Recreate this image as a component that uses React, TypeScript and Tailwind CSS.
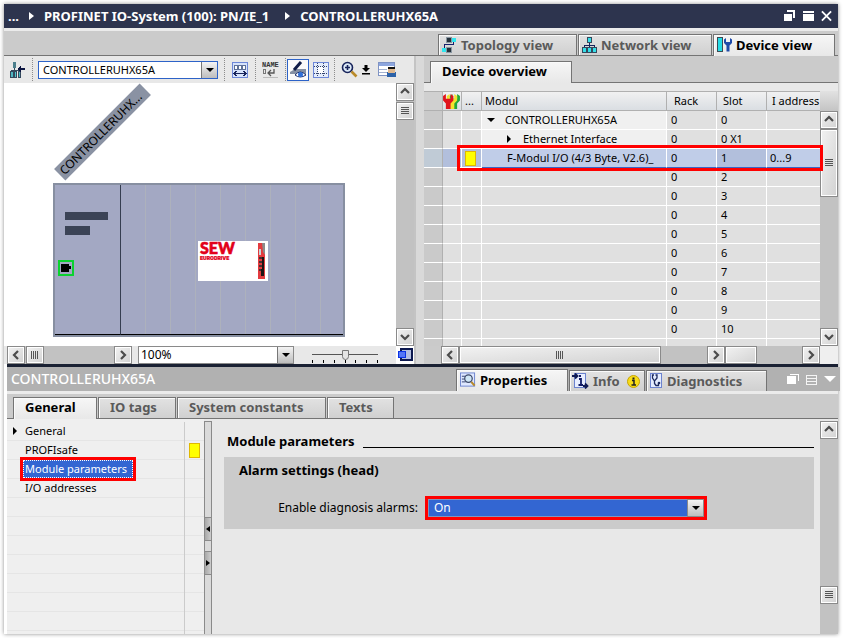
import React from "react";

type Dir = "up" | "down" | "left" | "right";

const arrowPaths: Record<Dir, string> = {
  up: "M4 9 L8 5 L12 9",
  down: "M4 6 L8 10 L12 6",
  left: "M10 4 L6 8 L10 12",
  right: "M6 4 L10 8 L6 12",
};

const raised =
  "block shrink-0 border border-[#8a8a8a] bg-gradient-to-br from-[#f2f2f2] to-[#d2d2d2] shadow-[inset_0_0_0_1px_#ffffff]";

function ScrollButton({ dir, label }: { dir: Dir; label: string }) {
  return (
    <button type="button" aria-label={label} className={`${raised} h-[18px] w-[18px]`}>
      <svg viewBox="0 0 16 16" className="h-4 w-4" fill="none" stroke="#4c4c4c" strokeWidth="2.2">
        <path d={arrowPaths[dir]} />
      </svg>
    </button>
  );
}

function Grip({ vertical }: { vertical?: boolean }) {
  return (
    <svg width="10" height="10" viewBox="0 0 10 10" shapeRendering="crispEdges" fill="#555">
      {[1, 3, 5, 7].map((n) =>
        vertical ? <rect key={n} x={n} y="1" width="1" height="8" /> : <rect key={n} x="1" y={n} width="8" height="1" />
      )}
    </svg>
  );
}

function Caret() {
  return (
    <svg width="8" height="4" viewBox="0 0 8 4">
      <path d="M0 0H8L4 4Z" fill="#000" />
    </svg>
  );
}

function TopologyIcon() {
  return (
    <svg width="15" height="16" viewBox="0 0 15 16" shapeRendering="crispEdges">
      <rect x="4" y="0" width="6" height="6" fill="#8a97a2" />
      <rect x="5" y="1" width="4" height="4" fill="#26323c" />
      <rect x="10" y="1" width="4" height="4" fill="#2fe6ee" />
      <rect x="0" y="11" width="4" height="4" fill="#2fe6ee" />
      <rect x="4" y="10" width="6" height="6" fill="#8a97a2" />
      <rect x="5" y="11" width="4" height="4" fill="#26323c" />
      <path d="M11.5 5V7.500H2.500V11" fill="none" stroke="#16206a" strokeWidth="1" />
    </svg>
  );
}

function NetworkIcon() {
  return (
    <svg width="15" height="16" viewBox="0 0 15 16" shapeRendering="crispEdges">
      <path d="M7.5 5V10M2.5 10V8.5H12.5V10" fill="none" stroke="#17235a" />
      {[
        [5, 0],
        [0, 10],
        [5, 10],
        [10, 10],
      ].map(([x, y]) => (
        <g key={`${x}-${y}`}>
          <rect x={x} y={y} width="5" height="6" fill="#34495e" />
          <rect x={x + 1} y={y + 1} width="3" height="4" fill="#35dfe8" />
        </g>
      ))}
    </svg>
  );
}

function DeviceIcon() {
  return (
    <svg width="15" height="16" viewBox="0 0 15 16">
      <rect x="0.5" y="0.5" width="5" height="14" fill="#25dbe5" stroke="#3b4a55" />
      <path d="M7 2.500V6L9.500 8.500V14.500H12.500V8.500L15 6V2.500L13 1V5H9V1Z" fill="#1f4aa8" />
    </svg>
  );
}

function WrenchesIcon() {
  const wrench = "M0 2V7L3 10V16H8V10L11 7V2L8 0V5H3V0Z";
  return (
    <svg width="17" height="15" viewBox="0 0 18 16">
      <path d={wrench} transform="translate(7 0)" fill="#22a83a" />
      <path d={wrench} transform="translate(4 0)" fill="#f3e32b" />
      <path d={wrench} fill="#e0141c" />
    </svg>
  );
}

function PropertiesIcon() {
  return (
    <svg width="16" height="16" viewBox="0 0 17 16">
      <rect x="0.500" y="0.500" width="15" height="14" fill="#dfe8ff" stroke="#6c83cf" />
      <path d="M2 4H6M2 7H5M2 10H6" stroke="#31406e" />
      <circle cx="9" cy="6.500" r="4" fill="#cfe6f5" stroke="#3c4868" strokeWidth="1.300" />
      <path d="M12 10L15.500 14" stroke="#b98a2a" strokeWidth="2.200" />
    </svg>
  );
}

function InfoIcon() {
  return (
    <svg width="17" height="16" viewBox="0 0 17 16">
      <rect x="2.500" y="0.500" width="11" height="14" fill="#e8eeff" stroke="#6c83cf" />
      <path d="M0 3H5M3 0.500L5.500 3L3 5.500M11 13H15M13 10.500L15.500 13L13 15.500" stroke="#111c55" strokeWidth="1.800" fill="none" />
      <path d="M7 6H9V12M6.500 12H11" stroke="#111c66" strokeWidth="1.800" fill="none" />
      <rect x="7" y="2" width="2" height="2" fill="#111c66" />
    </svg>
  );
}

function DiagnosticsIcon() {
  return (
    <svg width="13" height="16" viewBox="0 0 13 16">
      <rect x="0.500" y="0.500" width="11" height="14" fill="#e4ecff" stroke="#6c83cf" />
      <path d="M4 2H2.500V5L4.500 8L7 5V2H5.500M4.500 8V10.500L6 12.500H8.500V10" fill="none" stroke="#1d2a5e" strokeWidth="1.300" />
      <circle cx="9" cy="10" r="1.300" fill="#1d2a5e" />
    </svg>
  );
}

const tabBase =
  "border-x border-t border-[#747474] text-[13px] font-bold whitespace-nowrap shadow-[inset_1px_1px_0_#fafafa]";
const tabActive = "h-[22px] bg-gradient-to-b from-[#f6f6f6] to-[#e8e8e8] text-black";
const tabIdle = "h-[21px] bg-gradient-to-b from-[#e2e2e2] to-[#d0d0d0] text-[#5a5a5a]";

function ViewTab({ icon, label, active, width }: { icon: React.ReactNode; label: string; active?: boolean; width: string }) {
  return (
    <button
      type="button"
      role="tab"
      aria-selected={!!active}
      className={`flex items-center gap-1 pl-[3px] leading-[18px] ${tabBase} ${width} ${active ? `pb-[2px] ${tabActive}` : tabIdle}`}
    >
      {icon}
      {label}
    </button>
  );
}

function LabelTab({ label, active, width }: { label: string; active?: boolean; width: string }) {
  return (
    <button
      type="button"
      role="tab"
      aria-selected={!!active}
      className={`pl-[11px] text-left leading-4 ${tabBase} ${width} ${active ? `pb-1 ${tabActive}` : `pb-[2px] ${tabIdle}`}`}
    >
      {label}
    </button>
  );
}

function TitleBar() {
  const sep = (
    <svg width="5" height="8" viewBox="0 0 5 8">
      <path d="M0 0L5 4L0 8Z" fill="#fff" />
    </svg>
  );
  return (
    <header className="flex h-6 items-center bg-[#2d344e] pr-[6px] pl-1 text-[13px] leading-6 font-bold whitespace-nowrap text-white">
      <nav aria-label="Path" className="flex flex-1 items-center gap-[10px]">
        <span>...</span>
        {sep}
        <span className="pr-[6px]">PROFINET IO-System (100): PN/IE_1</span>
        {sep}
        <span>CONTROLLERUHX65A</span>
      </nav>
      <div className="flex items-center gap-[7px]">
        <button type="button" aria-label="Float">
          <svg className="block" width="12" height="12" viewBox="0 0 12 12" shapeRendering="crispEdges">
            <path d="M3 1H10V8" fill="none" stroke="#fff" strokeWidth="2" />
            <rect x="0" y="3" width="8" height="8" fill="#fff" stroke="#2d344e" />
            <rect x="0" y="4" width="7" height="7" fill="#fff" />
          </svg>
        </button>
        <button type="button" aria-label="Maximize">
          <svg className="block" width="11" height="12" viewBox="0 0 11 12" shapeRendering="crispEdges" fill="#fff">
            <rect y="1" width="11" height="2" />
            <rect y="4" width="11" height="7" />
          </svg>
        </button>
        <button type="button" aria-label="Close">
          <svg className="block" width="11" height="12" viewBox="0 0 12 12">
            <path d="M1 1L11 11M11 1L1 11" stroke="#fff" strokeWidth="2" />
          </svg>
        </button>
      </div>
    </header>
  );
}

function Dots() {
  return <span className="h-[23px] w-0 shrink-0 border-l border-dotted border-[#8c8c8c]" />;
}

function DeviceToolbar() {
  return (
    <div role="toolbar" aria-label="Device" className="flex h-[27px] items-center bg-[#e8e8e8] pl-[5px]">
      <button type="button" aria-label="Go to network view" className="mr-[6px]">
        <svg className="block" width="17" height="16" viewBox="0 0 17 16" shapeRendering="crispEdges">
          <path d="M5.500 5V9M2.500 10V8.500H9.500V10" fill="none" stroke="#34495e" />
          <rect x="4" y="0" width="3" height="6" fill="#4c7f8c" />
          <rect x="1" y="9" width="3" height="6" fill="#4fb7c2" stroke="#34495e" />
          <rect x="5" y="9" width="2" height="6" fill="#4fc7cf" stroke="#34495e" />
          <rect x="9" y="9" width="2" height="6" fill="#4fb7c2" stroke="#34495e" />
          <path d="M8 7L12 3V6H16V8H12V11Z" fill="#0c1540" />
        </svg>
      </button>
      <Dots />
      <div className="relative ml-[5px] h-[18px] w-[180px] border border-[#2d63c8] bg-white">
        <select aria-label="Device" className="block h-4 w-full appearance-none bg-transparent pl-1 text-[11px] leading-4 text-black outline-none">
          <option>CONTROLLERUHX65A</option>
        </select>
        <span className="pointer-events-none absolute top-0 right-0 flex h-4 w-4 items-center justify-center border-l border-[#777] bg-gradient-to-b from-[#f4f4f4] to-[#bdbdbd]">
          <Caret />
        </span>
      </div>
      <span className="ml-[6px] flex">
        <Dots />
      </span>
      <button type="button" aria-label="Show module labels" className="mx-[7px]">
        <svg className="block" width="16" height="16" viewBox="0 0 16 16" shapeRendering="crispEdges">
          <rect x="0.500" y="0.500" width="15" height="15" fill="#d7e3fb" stroke="#6d87d8" />
          {[2, 6, 10].map((x) => (
            <rect key={x} x={x + 0.5} y="3.500" width="3" height="4" fill="#fff" stroke="#5f7199" />
          ))}
          <path d="M2 11.500H14M4.500 9L2 11.500L4.500 14M11.500 9L14 11.500L11.500 14" fill="none" stroke="#16225a" />
        </svg>
      </button>
      <Dots />
      <button type="button" aria-label="Name" className="mx-[6px]">
        <svg className="block" width="17" height="17" viewBox="0 0 17 17">
          <text x="0" y="6" fontSize="7" fontWeight="700" fill="#333" fontFamily="Liberation Mono, monospace">
            NAME
          </text>
          <rect x="1.500" y="8.500" width="2" height="4" fill="none" stroke="#777" />
          <path d="M12 8V12H6M9 9L6 12L9 15" fill="none" stroke="#555" strokeWidth="1.300" />
          <path d="M1 16.500H16" stroke="#bbb" />
        </svg>
      </button>
      <Dots />
      <button type="button" aria-label="Show view" aria-pressed="true" className="ml-px flex h-[22px] w-[22px] items-center justify-center border border-[#2d63c8] bg-[#fafafa]">
        <svg width="18" height="18" viewBox="0 0 18 18">
          <path d="M1 11L6 8H17V13H1Z" fill="#8590a3" />
          <path d="M5 9L12 1" stroke="#101c48" strokeWidth="3" />
          <path d="M6 14Q11 8 17 14Q11 18 6 14Z" fill="#fff" stroke="#1b2f6e" />
          <circle cx="11.500" cy="13.500" r="2.500" fill="#2f6fd8" />
        </svg>
      </button>
      <button type="button" aria-label="Show grid" className="mr-[5px] ml-1">
        <svg className="block" width="16" height="16" viewBox="0 0 16 16" shapeRendering="crispEdges">
          <rect x="0.500" y="0.500" width="15" height="15" fill="#e4ecfb" stroke="#6d87d8" />
          <rect x="5" y="5" width="6" height="6" fill="#fff" />
          <path d="M1 4.500H15M1 11.500H15M4.500 1V15M10.500 1V15" stroke="#33436f" strokeDasharray="1 1" />
        </svg>
      </button>
      <Dots />
      <button type="button" aria-label="Zoom in" className="mr-1 ml-[6px] flex items-center gap-1">
        <svg width="17" height="17" viewBox="0 0 17 17">
          <circle cx="6.500" cy="6.500" r="5" fill="#dce9f7" stroke="#17235a" strokeWidth="1.600" />
          <path d="M6.500 4V9M4 6.500H9" stroke="#17235a" strokeWidth="1.600" />
          <path d="M10.500 10.500L15.500 15.500" stroke="#b98a2a" strokeWidth="2.600" />
        </svg>
        <svg width="8" height="12" viewBox="0 0 8 12">
          <path d="M2.500 1H5.500V4H8L4 8L0 4H2.500ZM0 9H8V10.500H0Z" fill="#000" />
        </svg>
      </button>
      <button type="button" aria-label="Save window settings" className="ml-1">
        <svg className="block" width="18" height="17" viewBox="0 0 18 17">
          <rect x="0.500" y="1.500" width="16" height="13" fill="#fff" stroke="#7f93c4" />
          <rect x="1" y="2" width="15" height="3" fill="#8da6de" />
          <path d="M1 8.500H9M1 11.500H9" stroke="#a4b2d0" />
          <rect x="9" y="11" width="9" height="5" fill="#2d62a8" />
          <rect x="10" y="6" width="7" height="3" fill="#111" />
          <rect x="10" y="8" width="7" height="4" fill="#e0b98f" />
        </svg>
      </button>
    </div>
  );
}

function DeviceCanvas() {
  return (
    <div className="relative min-w-0 flex-1 overflow-hidden bg-white">
      <div className="absolute top-[41px] left-[38px] h-4 w-[121px] -rotate-45 bg-[#8a92a3] pl-[3px] text-[12px] leading-4 text-black">
        CONTROLLERUHX...
      </div>
      <div className="mt-[100px] ml-[49px] flex h-[154px] w-[292px] border-2 border-[#878fa1] bg-[#a3a8c3]">
        <div className="flex w-[66px] flex-col border-r border-b border-r-[#353d50] border-b-black">
          <span className="mt-[27px] ml-[10px] h-2 w-[43px] bg-[#3b4356]" />
          <span className="mt-[6px] ml-[10px] h-[9px] w-[25px] bg-[#3b4356]" />
          <svg className="mt-[25px] ml-[3px]" width="16" height="16" viewBox="0 0 16 16" shapeRendering="crispEdges">
            <rect x="1" y="1" width="14" height="14" fill="#a3a8c3" stroke="#0bd22f" strokeWidth="2" />
            <path d="M3 4H11V6H13V9H11V12H3Z" fill="#000" />
          </svg>
        </div>
        <div className="relative flex flex-1 border-b border-black">
          {[1, 2, 3, 4, 5, 6, 7, 8].map((n) => (
            <span key={n} className="w-[25px] shrink-0 border-r border-[#adb1bc]" />
          ))}
          <svg className="absolute top-14 left-[77px] overflow-visible" width="70" height="40" viewBox="0 0 70 40">
            <rect width="70" height="40" fill="#fff" />
            <text x="2" y="13" fontSize="16" fontWeight="900" fill="#e2001a" stroke="#e2001a" strokeWidth="0.600" fontFamily="Lato, sans-serif">
              SEW
            </text>
            <text x="2" y="19" fontSize="5" fontWeight="900" fill="#e2001a" stroke="#e2001a" strokeWidth="0.200" fontFamily="Inter, sans-serif">
              EURODRIVE
            </text>
            <rect x="60" y="2" width="7" height="36" fill="#e33b3f" />
            <path d="M64 2H67V14L65 11Z" fill="#8b8b8b" />
            <rect x="61" y="8" width="2" height="6" fill="#c9d4d8" />
            <path d="M61 17H64M61 21H64M61 25H64M61 29H64" stroke="#4a3033" strokeWidth="2" />
            <path d="M64 16H66V35H63V28H64Z" fill="#1d1515" />
          </svg>
        </div>
      </div>
    </div>
  );
}

function DevicePane() {
  return (
    <section aria-label="Device view" className="flex w-[412px] shrink-0 flex-col border-r-2 border-[#c4c4c4] bg-[#e8e8e8]">
      <DeviceToolbar />
      <div className="flex h-[263px]">
        <DeviceCanvas />
        <div className="flex w-[18px] flex-col bg-[#c2c2c2]">
          <ScrollButton dir="up" label="Scroll up" />
          <span className={`${raised} mt-px h-[18px] w-[18px]`}>
            <span className="flex h-4 w-4 items-center justify-center">
              <Grip />
            </span>
          </span>
          <span className="flex-1" />
          <ScrollButton dir="down" label="Scroll down" />
        </div>
      </div>
      <div className="flex h-[18px] items-center pl-[3px]">
        <div className="flex w-[125px] bg-[#c2c2c2]">
          <ScrollButton dir="left" label="Scroll left" />
          <span className={`${raised} ml-px h-[18px] w-[18px]`}>
            <span className="flex h-4 w-4 items-center justify-center">
              <Grip vertical />
            </span>
          </span>
          <span className="flex-1" />
          <ScrollButton dir="right" label="Scroll right" />
        </div>
        <div className="relative ml-[6px] h-[18px] w-[156px] border border-[#8a8a8a] bg-white">
          <select aria-label="Zoom" className="block h-4 w-full appearance-none bg-transparent pl-[2px] text-[12px] leading-4 text-black outline-none">
            <option>100%</option>
          </select>
          <span className="pointer-events-none absolute top-0 right-0 flex h-4 w-4 items-center justify-center border-l border-[#777] bg-gradient-to-b from-[#f4f4f4] to-[#bdbdbd]">
            <Caret />
          </span>
        </div>
        <div className="relative ml-[18px] h-[18px] w-[67px]">
          <svg className="absolute inset-0" width="67" height="18" viewBox="0 0 67 18" shapeRendering="crispEdges">
            <rect y="8" width="66" height="1" fill="#555" />
            {[0, 11, 22, 33, 43, 54, 65].map((x) => (
              <rect key={x} x={x} y="14" width="1" height="3" fill="#000" />
            ))}
          </svg>
          <input
            type="range"
            aria-label="Zoom level"
            defaultValue={50}
            className="absolute inset-0 h-[17px] w-full appearance-none bg-transparent [&::-webkit-slider-thumb]:h-[10px] [&::-webkit-slider-thumb]:w-[7px] [&::-webkit-slider-thumb]:appearance-none [&::-webkit-slider-thumb]:rounded-b-full [&::-webkit-slider-thumb]:border [&::-webkit-slider-thumb]:border-[#777] [&::-webkit-slider-thumb]:bg-[#e4e4e4]"
          />
        </div>
        <span className="flex-1" />
        <button type="button" aria-label="Overview" className="h-[18px] w-[18px] bg-white">
          <svg className="block" width="18" height="18" viewBox="0 0 18 18" shapeRendering="crispEdges">
            <rect x="5" y="3" width="11" height="11" fill="#b4bfe0" stroke="#0d1950" strokeWidth="2" />
            <rect x="2.500" y="5.500" width="7" height="6" fill="#5577f6" stroke="#0a33e6" />
          </svg>
        </button>
      </div>
    </section>
  );
}

const rows = [
  { name: "CONTROLLERUHX65A", rack: "0", slot: "0", addr: "" },
  { name: "Ethernet Interface", rack: "0", slot: "0 X1", addr: "" },
  { name: "F-Modul I/O (4/3 Byte, V2.6)_", rack: "0", slot: "1", addr: "0...9" },
  ...["2", "3", "4", "5", "6", "7", "8", "9", "10"].map((slot) => ({ name: "", rack: "0", slot, addr: "" })),
];

const head = "border-r border-[#b0b0b0] p-0 text-left font-normal";
const cell = "border-r border-b border-white p-0";

function OverviewTable() {
  return (
    <div className="relative min-w-0 flex-1">
      <div className="h-[255px] overflow-hidden bg-[#e0e0e0]">
        <table className="w-full table-fixed border-separate border-spacing-0 text-[11px] leading-[18px] whitespace-nowrap text-black">
          <colgroup>
            <col className="w-[19px]" />
            <col className="w-[19px]" />
            <col className="w-5" />
            <col />
            <col className="w-[50px]" />
            <col className="w-[50px]" />
            <col className="w-[53px]" />
          </colgroup>
          <thead>
            <tr className="h-5 bg-gradient-to-b from-[#f2f2f2] to-[#d9dde2] [&>th]:border-y [&>th]:border-y-[#b0b0b0]">
              <th className={`${head} bg-[#d0d0d0]`} aria-label="Row" />
              <th className={head} aria-label="Status">
                <WrenchesIcon />
              </th>
              <th className={`${head} pl-[3px]`}>...</th>
              <th className={`${head} pl-[3px]`}>Modul</th>
              <th className={`${head} pl-[7px]`}>Rack</th>
              <th className={`${head} pl-[6px]`}>Slot</th>
              <th className="overflow-hidden p-0 pl-[5px] text-left font-normal">I address</th>
            </tr>
          </thead>
          <tbody>
            {rows.map((r, i) => {
              const selected = i === 2;
              const soft = selected ? "bg-[#c0cde8] border-b-[#3b66c4]" : i < 2 ? "bg-[#f0f0f0]" : "";
              return (
                <tr key={r.slot} aria-selected={selected} className={`h-[19px] ${selected ? "bg-[#b2bfdc]" : "bg-[#e0e0e0]"}`}>
                  <td className={`border-r border-b border-r-[#b0b0b0] border-b-white p-0 ${selected ? "bg-[#c0cbd6]" : "bg-[#cacaca]"}`} />
                  <td className={cell} />
                  <td className={`${cell} pl-[3px]`}>
                    {selected && <span className="block h-[15px] w-[11px] border border-[#e0b800] bg-[#ffff00]" />}
                  </td>
                  <td className={`${cell} ${soft}`}>
                    {i === 0 && (
                      <span className="flex items-center gap-[10px] pl-[5px]">
                        <Caret />
                        {r.name}
                      </span>
                    )}
                    {i === 1 && (
                      <span className="flex items-center gap-3 pl-[25px]">
                        <svg width="4" height="8" viewBox="0 0 4 8">
                          <path d="M0 0L4 4L0 8Z" />
                        </svg>
                        {r.name}
                      </span>
                    )}
                    {i === 2 && <span className="pl-[25px]">{r.name}</span>}
                  </td>
                  <td className={`${cell} pl-1 ${selected ? soft : ""}`}>{r.rack}</td>
                  <td className={`${cell} pl-1 ${selected ? "border-b-[#3b66c4]" : ""}`}>{r.slot}</td>
                  <td className={`border-b border-white p-0 pl-[3px] ${selected ? soft : ""}`}>{r.addr}</td>
                </tr>
              );
            })}
            <tr className="h-[19px]">
              <td className="border-r border-[#b0b0b0] bg-[#cacaca] p-0" />
              <td className={cell} />
              <td className={cell} />
              <td className={cell} />
              <td className={cell} />
              <td className={cell} />
              <td className="p-0" />
            </tr>
          </tbody>
        </table>
      </div>
      <div className="pointer-events-none absolute top-[54px] -right-[3px] left-[33px] z-10 h-[26px] border-[3px] border-[#ff0000]" />
    </div>
  );
}

function OverviewPane() {
  return (
    <section aria-label="Device overview" className="flex min-w-0 flex-1 flex-col border-l-8 border-[#d9d9d9] bg-[#e8e8e8]">
      <div role="tablist" className="flex h-[27px] items-end border-b border-[#747474] bg-[#cbcbcb] pl-[6px] [&>[aria-selected=true]]:-mb-px">
        <LabelTab label="Device overview" active width="w-[142px]" />
      </div>
      <div className="mt-2 flex">
        <OverviewTable />
        <div className="flex w-[18px] flex-col bg-[#c2c2c2]">
          <span className="h-5 bg-gradient-to-b from-[#e2e2e2] to-[#c4c4c4]" />
          <ScrollButton dir="up" label="Scroll overview up" />
          <span className={`${raised} h-[68px] w-[18px]`}>
            <span className="flex h-full items-center justify-center">
              <Grip />
            </span>
          </span>
          <span className="flex-1" />
          <ScrollButton dir="down" label="Scroll overview down" />
        </div>
      </div>
      <div className="flex h-[18px] bg-[#c2c2c2]">
        <span className="w-[17px] bg-[#cbcbcb]" />
        <ScrollButton dir="left" label="Scroll overview left" />
        <span className={`${raised} h-[18px] w-[202px]`}>
          <span className="flex h-full items-center justify-center">
            <Grip vertical />
          </span>
        </span>
        <span className="flex-1" />
        <ScrollButton dir="right" label="Scroll list right" />
        <span className={`${raised} h-[18px] w-8`} />
        <span className="flex-1" />
        <ScrollButton dir="right" label="Scroll overview right" />
        <span className="w-[18px] bg-[#efefef]" />
      </div>
    </section>
  );
}

function InspectorHeader() {
  return (
    <div className="-mr-[2px] flex h-6 items-end bg-[#b1b1b1] pr-1 pl-1">
      <h2 className="flex-1 text-[14px] leading-6 font-medium whitespace-nowrap text-white">CONTROLLERUHX65A</h2>
      <div role="tablist" aria-label="Inspector" className="flex items-end gap-px">
        <ViewTab icon={<PropertiesIcon />} label="Properties" active width="w-[112px]" />
        <button type="button" role="tab" aria-selected="false" className={`flex w-[76px] items-center gap-1 pl-[2px] leading-[18px] ${tabBase} ${tabIdle}`}>
          <InfoIcon />
          Info
          <svg className="mr-1 ml-auto" width="13" height="13" viewBox="0 0 13 13">
            <circle cx="6.500" cy="6.500" r="6" fill="#f7dc18" stroke="#c7a400" />
            <path d="M5 5.500H7V10M4.500 10H9" fill="none" stroke="#222" strokeWidth="1.500" />
            <rect x="5.500" y="2.500" width="2" height="2" fill="#222" />
          </svg>
        </button>
        <ViewTab icon={<DiagnosticsIcon />} label="Diagnostics" width="w-[121px]" />
      </div>
      <div className="ml-5 flex h-6 items-center gap-[7px]">
        <button type="button" aria-label="Float inspector">
          <svg className="block" width="12" height="12" viewBox="0 0 12 12" shapeRendering="crispEdges">
            <path d="M3 1H11V8" fill="none" stroke="#fff" strokeWidth="1" />
            <rect x="0" y="3" width="9" height="8" fill="#fff" />
          </svg>
        </button>
        <button type="button" aria-label="Show list">
          <svg className="block" width="11" height="11" viewBox="0 0 11 11" shapeRendering="crispEdges">
            <path d="M0 1.500H11M0 4.500H11M0 7.500H11M0 10.500H11M.5 1V11M10.500 1V11" stroke="#f4f4f4" />
          </svg>
        </button>
        <button type="button" aria-label="Collapse inspector">
          <svg className="block" width="12" height="6" viewBox="0 0 12 6">
            <path d="M0 0H12L6 6Z" fill="#fff" />
          </svg>
        </button>
      </div>
    </div>
  );
}

function SettingsTree() {
  return (
    <nav aria-label="Settings" className="flex w-[197px] shrink-0 bg-[#efefef] pt-[3px] text-[11px] leading-[18px] text-black">
      <ul className="w-[178px] border-r border-[#cbcbcb]">
        <li className="flex h-[19px] items-center border-b border-[#e5e5e5] pl-[6px]">
          <svg width="4" height="8" viewBox="0 0 4 8">
            <path d="M0 0L4 4L0 8Z" />
          </svg>
          <a href="#general" className="pl-2">
            General
          </a>
        </li>
        <li className="flex h-[19px] items-center border-b border-[#e5e5e5] pl-[18px]">
          <a href="#profisafe">PROFIsafe</a>
        </li>
        <li className="relative flex h-[19px] items-center border-b border-[#e5e5e5] pl-4">
          <a href="#module" aria-current="true" className="w-[110px] border border-dotted border-white bg-[#3366d2] pl-px leading-4 whitespace-nowrap text-white">
            Module parameters
          </a>
          <span className="pointer-events-none absolute -top-[3px] left-[13px] h-6 w-[116px] border-[3px] border-[#ff0000]" />
        </li>
        <li className="flex h-[19px] items-center border-b border-[#e5e5e5] pl-[18px]">
          <a href="#addresses">I/O addresses</a>
        </li>
        {[0, 1, 2, 3, 4, 5, 6].map((n) => (
          <li key={n} className="h-[19px] border-b border-[#e5e5e5]" />
        ))}
      </ul>
      <div className="flex-1">
        {[0, 1, 2, 3, 4, 5, 6, 7, 8, 9, 10].map((n) => (
          <div key={n} className="flex h-[19px] items-center border-b border-[#e5e5e5] pl-1">
            {n === 1 && <span className="h-[15px] w-[11px] border border-[#e0b800] bg-[#ffff00]" />}
          </div>
        ))}
      </div>
    </nav>
  );
}

function Splitter() {
  const btn = "flex h-6 items-center justify-center border-y border-[#8a8a8a] bg-gradient-to-r from-[#a8a8a8] to-[#cccccc]";
  return (
    <div className="mt-[2px] w-2 shrink-0 border-x border-t border-[#8a8a8a] bg-[#dadada] pt-[95px]">
      <button type="button" aria-label="Collapse tree" className={`${btn} w-full`}>
        <svg width="4" height="6" viewBox="0 0 4 6">
          <path d="M4 0L0 3L4 6Z" />
        </svg>
      </button>
      <button type="button" aria-label="Expand tree" className={`${btn} mt-[10px] w-full`}>
        <svg width="4" height="6" viewBox="0 0 4 6">
          <path d="M0 0L4 3L0 6Z" />
        </svg>
      </button>
    </div>
  );
}

function Inspector() {
  return (
    <section aria-label="Inspector" className="ml-[3px] flex flex-1 flex-col">
      <InspectorHeader />
      <div role="tablist" aria-label="Property groups" className="flex h-7 items-end gap-px border-t-[3px] border-b border-t-[#ebebeb] border-b-[#747474] bg-[#cbcbcb] pl-[6px] [&>[aria-selected=true]]:-mb-px">
        <LabelTab label="General" active width="w-[84px]" />
        <LabelTab label="IO tags" width="w-[78px]" />
        <LabelTab label="System constants" width="w-[149px]" />
        <LabelTab label="Texts" width="w-[67px]" />
      </div>
      <div className="flex flex-1 bg-[#e8e8e8]">
        <SettingsTree />
        <Splitter />
        <div className="flex-1 pt-3 pr-[6px] pl-3 text-black">
          <h3 className="flex items-center gap-2 pl-[3px] text-[13px] leading-5 font-bold whitespace-nowrap">
            Module parameters
            <span className="mt-3 flex-1 border-b border-black" />
          </h3>
          <div className="mt-[6px] h-[72px] bg-[#cbcbcb]">
            <h4 className="pt-[3px] pl-[15px] text-[13px] leading-5 font-bold">Alarm settings (head)</h4>
            <div className="mt-4 flex items-center">
              <label htmlFor="alarms" className="w-[201px] pr-[7px] text-right text-[12px] leading-6 whitespace-nowrap">
                Enable diagnosis alarms:
              </label>
              <div className="relative h-6 w-[282px] border-[3px] border-[#ff0000]">
                <select id="alarms" className="block h-[18px] w-full appearance-none border border-[#8096bd] bg-[#3366d2] pl-[5px] text-[12px] leading-4 text-white outline-none">
                  <option>On</option>
                </select>
                <span className="pointer-events-none absolute top-0 right-0 flex h-[18px] w-[17px] items-center justify-center border border-[#8a8a8a] bg-gradient-to-b from-[#f4f4f4] to-[#bdbdbd]">
                  <Caret />
                </span>
              </div>
            </div>
          </div>
        </div>
        <div className="mt-[2px] flex w-[18px] flex-col bg-[#c2c2c2] pb-[30px]">
          <ScrollButton dir="up" label="Scroll settings up" />
          <span className="flex-1" />
          <span className={`${raised} h-[18px] w-[18px]`}>
            <span className="flex h-4 w-4 items-center justify-center">
              <Grip />
            </span>
          </span>
        </div>
      </div>
    </section>
  );
}

export default function App() {
  return (
    <div className="flex min-h-screen flex-col bg-white pt-1 pr-[6px] pb-1 pl-1 font-['Noto_Sans',sans-serif]">
      <main className="flex flex-1 flex-col shadow-[0_0_4px_rgba(0,0,0,0.45)]">
        <TitleBar />
        <div role="tablist" aria-label="Views" className="flex h-7 items-end justify-end gap-px border-t-[3px] border-b border-t-[#ebebeb] border-b-[#747474] bg-[#cbcbcb] pr-[3px] [&>[aria-selected=true]]:-mb-px">
          <ViewTab icon={<TopologyIcon />} label="Topology view" width="w-[139px]" />
          <ViewTab icon={<NetworkIcon />} label="Network view" width="w-[134px]" />
          <ViewTab icon={<DeviceIcon />} label="Device view" active width="w-[122px]" />
        </div>
        <div className="flex">
          <DevicePane />
          <OverviewPane />
        </div>
        <div className="ml-[3px] h-[3px] bg-[#1a2133]" />
        <Inspector />
      </main>
    </div>
  );
}
